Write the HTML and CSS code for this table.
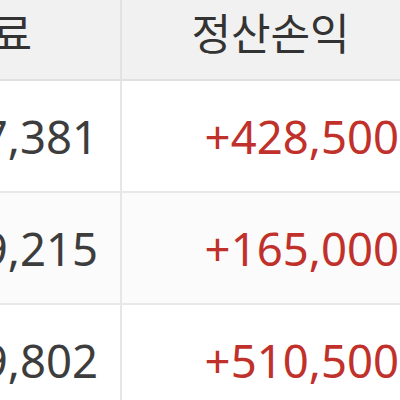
FILE: index.html
```html
<!DOCTYPE html>
<html lang="ko">
<head>
<meta charset="utf-8">
<link rel="stylesheet" href="styles.css">
</head>
<body>
<div class="wrap">
  <table class="grid">
    <colgroup>
      <col class="col1">
      <col class="col2">
    </colgroup>
    <thead>
      <tr>
        <th class="h1">수수료</th>
        <th class="h2">정산손익</th>
      </tr>
    </thead>
    <tbody>
      <tr>
        <td>7,381</td>
        <td class="pos">+428,500</td>
      </tr>
      <tr class="alt">
        <td>9,215</td>
        <td class="pos">+165,000</td>
      </tr>
      <tr>
        <td>9,802</td>
        <td class="pos">+510,500</td>
      </tr>
    </tbody>
  </table>
</div>
</body>
</html>
```

FILE: styles.css
```css
html, body {
  margin: 0;
  padding: 0;
  background: #ffffff;
  overflow: hidden;
}
.wrap {
  width: 400px;
  height: 400px;
  overflow: hidden;
}
.grid {
  margin-top: -18px;
  margin-left: -100px;
  border-collapse: collapse;
  table-layout: fixed;
  width: 520px;
  font-family: "Noto Sans", "Noto Sans CJK KR", sans-serif;
}
.col1 { width: 221px; }
.col2 { width: 299px; }
.grid th {
  background: #f1f1f1;
  color: #333333;
  font-weight: 400;
  font-size: 43px;
  font-family: "Noto Sans CJK KR", "Noto Sans", sans-serif;
  height: 97px;
  padding: 0;
  text-align: center;
  border-bottom: 2px solid #e0e0e0;
  border-right: 2px solid #e2e2e2;
  white-space: nowrap;
}
.grid th.h1 {
  text-align: right;
  padding-right: 88px;
}
.grid td {
  height: 110px;
  padding: 0 22px 0 0;
  text-align: right;
  font-size: 45.5px;
  color: #3d3d3d;
  border-bottom: 2px solid #e8e8e8;
  border-right: 2px solid #e6e6e6;
  white-space: nowrap;
}
.grid .alt td {
  background: #fbfbfb;
}
.grid td.pos {
  color: #c1312b;
  padding-right: 20px;
}
```
